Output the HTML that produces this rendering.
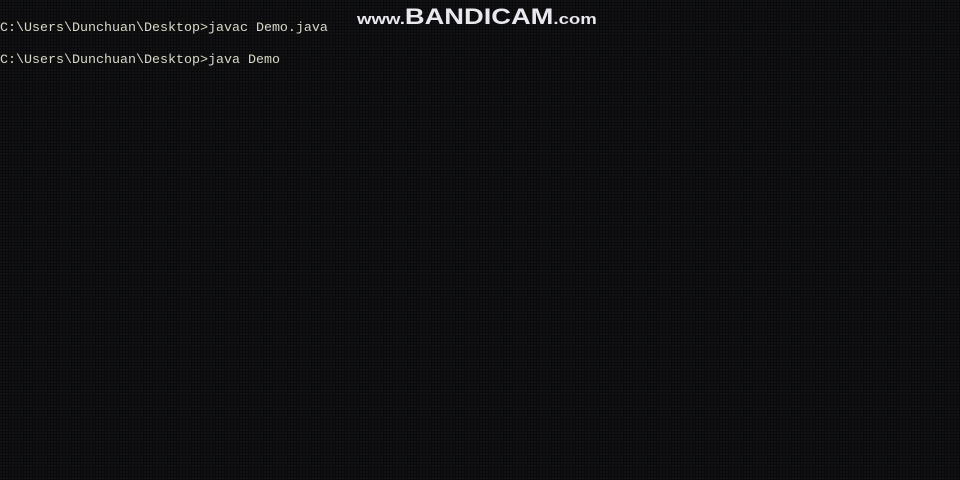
<!DOCTYPE html>
<html><head><meta charset="utf-8"><style>
html,body{margin:0;padding:0;}
body{width:960px;height:480px;overflow:hidden;background:#0a0b08;position:relative;
background-image:radial-gradient(circle at 1px 1px,#171926 0.6px,transparent 1px);background-size:3px 3px;}
.l{position:absolute;left:0;font-family:"Liberation Mono",monospace;font-size:13.33px;color:#d8d8c8;white-space:pre;line-height:16px;}
.wm{position:absolute;left:357px;top:4px;font-family:"Liberation Sans",sans-serif;font-weight:bold;color:#e8e8ee;font-size:22px;white-space:pre;transform:scaleX(1.24);transform-origin:left top;}
.wm .s{font-size:15px;}
</style></head><body>
<div class="l" style="top:21px">C:\Users\Dunchuan\Desktop&gt;javac Demo.java</div>
<div class="l" style="top:53px">C:\Users\Dunchuan\Desktop&gt;java Demo</div>
<div class="wm"><span class="s">www.</span>BANDICAM<span class="s">.com</span></div>
</body></html>
